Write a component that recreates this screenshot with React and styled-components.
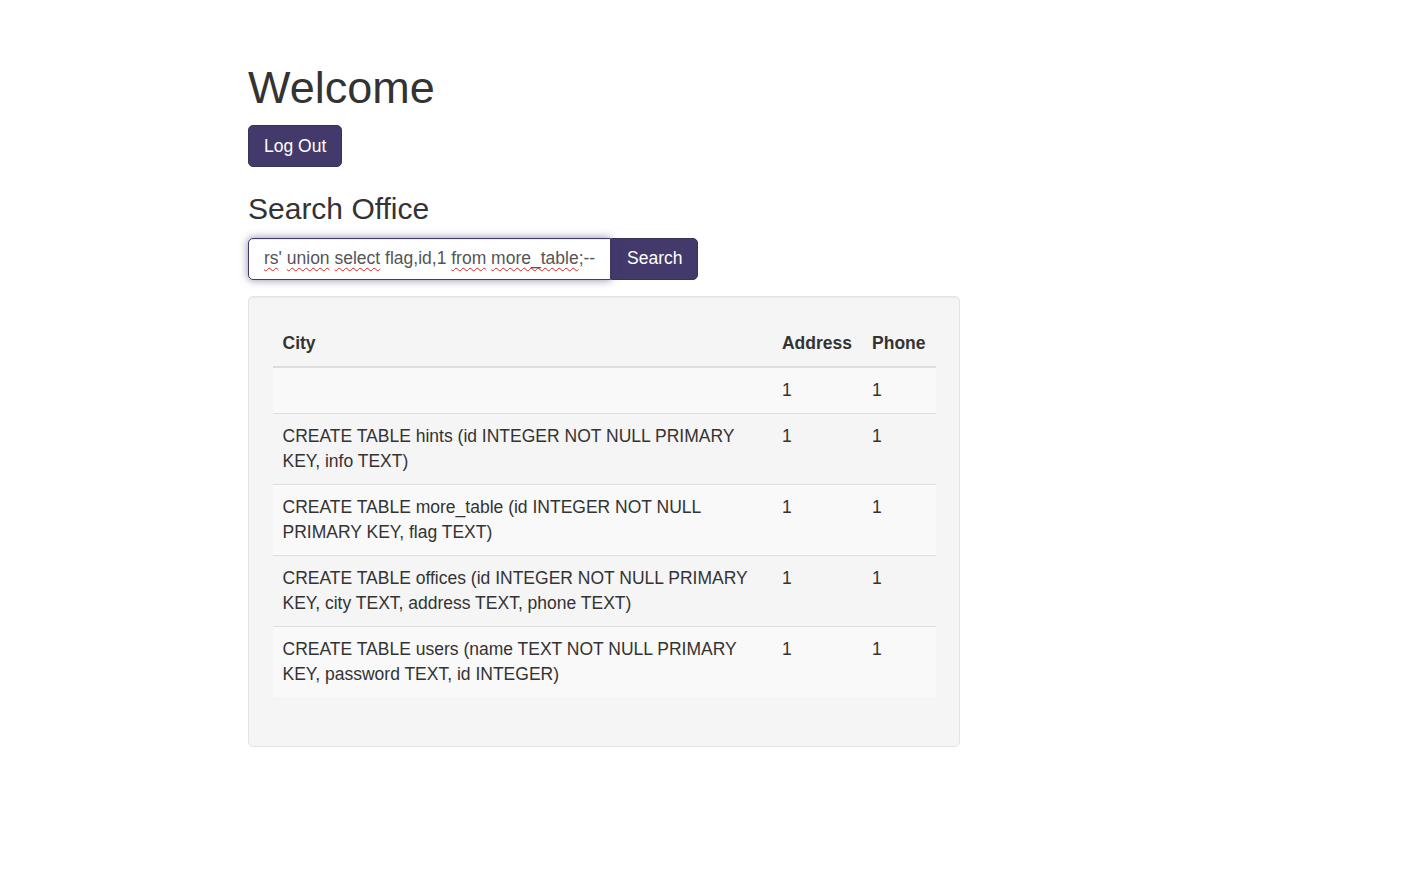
import React from "react";
import styled, { createGlobalStyle } from "styled-components";

const Global = createGlobalStyle`
  html, body { margin: 0; padding: 0; background: #fff; }
  body {
    font-family: "Liberation Sans", Arial, Helvetica, sans-serif;
    font-size: 17.5px;
    line-height: 25px;
    color: #333;
  }
  * { box-sizing: border-box; }
`;

const Page = styled.div`
  padding: 38px 0 0 248px;
  width: 960px;
`;

const Title = styled.h1`
  font-size: 45px;
  font-weight: 500;
  line-height: 49.5px;
  margin: 25px 0 12.5px;
`;

const Button = styled.button`
  font-family: inherit;
  font-size: 17.5px;
  line-height: 25px;
  padding: 7.5px 15px;
  height: 42px;
  color: #fff;
  background: #433a6b;
  border: 1px solid #3a325e;
  border-radius: ${(p) => (p.$attached ? "0 5px 5px 0" : "5px")};
  cursor: pointer;
`;

const Subtitle = styled.h3`
  font-size: 30px;
  font-weight: 500;
  line-height: 33px;
  margin: 25px 0 12.5px;
`;

const InputGroup = styled.div`
  display: flex;
  width: 451px;
  margin-bottom: 16px;
`;

const Field = styled.div`
  width: 363px;
  height: 42px;
  padding: 7.5px 15px;
  border: 1px solid #433a6b;
  border-radius: 5px 0 0 5px;
  background: #fff;
  box-shadow: inset 0 1px 1px rgba(0, 0, 0, 0.075), 0 0 8px rgba(67, 58, 107, 0.6);
  font-size: 17.5px;
  line-height: 25px;
  color: #555;
  white-space: nowrap;
  overflow: hidden;
  position: relative;
  z-index: 1;
`;

const Misspelled = styled.span`
  text-decoration: underline wavy #e02020;
  text-decoration-thickness: 1px;
  text-underline-offset: 3px;
`;

const Well = styled.div`
  width: 712px;
  padding: 24.5px 23.5px 23.75px;
  background: #f5f5f5;
  border: 1px solid #e3e3e3;
  border-radius: 5px;
  box-shadow: inset 0 1px 1px rgba(0, 0, 0, 0.05);
`;

const Table = styled.table`
  width: 100%;
  border-collapse: collapse;
  border-spacing: 0;
  margin-bottom: 25px;
`;

const Th = styled.th`
  text-align: left;
  font-weight: bold;
  padding: 10px;
  line-height: 25px;
  vertical-align: bottom;
  border-bottom: 2px solid #ddd;
  width: ${(p) => p.$w}px;
`;

const Row = styled.tr`
  background: ${(p) => (p.$odd ? "#f9f9f9" : "transparent")};
`;

const Td = styled.td`
  padding: 10px;
  line-height: 25px;
  vertical-align: top;
  border-top: 1px solid #ddd;
`;

const rows = [
  ["", "1", "1"],
  ["CREATE TABLE hints (id INTEGER NOT NULL PRIMARY KEY, info TEXT)", "1", "1"],
  ["CREATE TABLE more_table (id INTEGER NOT NULL PRIMARY KEY, flag TEXT)", "1", "1"],
  ["CREATE TABLE offices (id INTEGER NOT NULL PRIMARY KEY, city TEXT, address TEXT, phone TEXT)", "1", "1"],
  ["CREATE TABLE users (name TEXT NOT NULL PRIMARY KEY, password TEXT, id INTEGER)", "1", "1"],
];

export default function App() {
  return (
    <>
      <Global />
      <Page>
        <Title>Welcome</Title>
        <Button>Log Out</Button>
        <Subtitle>Search Office</Subtitle>
        <InputGroup>
          <Field role="textbox">
            <Misspelled>rs</Misspelled>' <Misspelled>union</Misspelled>{" "}
            <Misspelled>select</Misspelled> flag,id,1 <Misspelled>from</Misspelled>{" "}
            <Misspelled>more_table</Misspelled>;--
          </Field>
          <Button $attached>Search</Button>
        </InputGroup>
        <Well>
          <Table>
            <thead>
              <tr>
                <Th $w={500}>City</Th>
                <Th $w={90}>Address</Th>
                <Th>Phone</Th>
              </tr>
            </thead>
            <tbody>
              {rows.map((r, i) => (
                <Row key={i} $odd={i % 2 === 0}>
                  <Td>{r[0]}</Td>
                  <Td>{r[1]}</Td>
                  <Td>{r[2]}</Td>
                </Row>
              ))}
            </tbody>
          </Table>
        </Well>
      </Page>
    </>
  );
}
